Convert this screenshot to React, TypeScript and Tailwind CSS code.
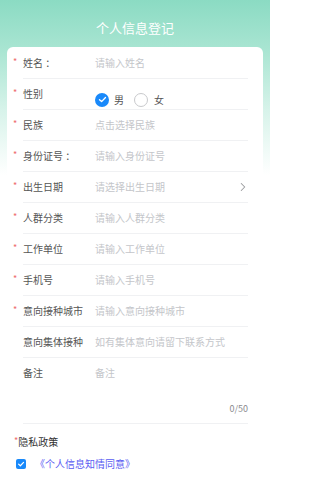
import { ChevronRight } from "lucide-react";

const font = "font-['Noto_Sans_CJK_SC','Noto_Sans',sans-serif]";

type Field = {
    label: string;
    placeholder: string;
    required?: boolean;
    arrow?: boolean;
};

const fields: Field[] = [
    { label: "民族", placeholder: "点击选择民族", required: true },
    { label: "身份证号 ：", placeholder: "请输入身份证号", required: true },
    { label: "出生日期", placeholder: "请选择出生日期", required: true, arrow: true },
    { label: "人群分类", placeholder: "请输入人群分类", required: true },
    { label: "工作单位", placeholder: "请输入工作单位", required: true },
    { label: "手机号", placeholder: "请输入手机号", required: true },
    { label: "意向接种城市", placeholder: "请输入意向接种城市", required: true },
    { label: "意向集体接种", placeholder: "如有集体意向请留下联系方式" },
];

function Star({ show }: { show?: boolean }) {
    return (
        <span className="w-[10px] -ml-[10px] shrink-0 text-[9px] leading-none text-[#ee6b6b] -mt-[3px]">
            {show ? "*" : ""}
        </span>
    );
}

function Row({ label, placeholder, required, arrow }: Field) {
    return (
        <div className="flex h-[31px] items-center border-b border-[#f0f1f3]">
            <Star show={required} />
            <span className="w-[72px] shrink-0 text-[10px] leading-[14px] text-[#555555] whitespace-pre">{label}</span>
            <span className="flex-1 text-[10px] leading-[14px] text-[#c4c6ca]">{placeholder}</span>
            {arrow && <ChevronRight className="w-[14px] h-[14px] text-[#9a9b9e] -mr-[2px]" strokeWidth={1.8} />}
        </div>
    );
}

export default function App() {
    return (
        <div
            className={`${font} w-[270px] h-[479px] overflow-hidden bg-[linear-gradient(180deg,#8bdbc3_0px,#a9e5d2_50px,#d7f3ea_110px,#ffffff_175px)]`}
        >
            <div className="h-[47px] pt-[9px] flex items-center justify-center">
                <h1 className="text-[13px] leading-[16px] text-white">个人信息登记</h1>
            </div>

            <div className="mx-[7px] rounded-t-[6px] bg-white pt-[1px] pl-[16px] pr-[15px] h-[432px]">
                <div className="flex h-[31px] items-center border-b border-[#f0f1f3]">
                    <Star show />
                    <span className="w-[72px] shrink-0 text-[10px] leading-[14px] text-[#555555] whitespace-pre">姓名 ：</span>
                    <span className="flex-1 text-[10px] leading-[14px] text-[#c4c6ca]">请输入姓名</span>
                </div>

                <div className="flex h-[31px] items-center border-b border-[#f0f1f3]">
                    <Star show />
                    <span className="w-[72px] shrink-0 text-[10px] leading-[14px] text-[#555555]">性别</span>
                    <div className="flex items-center pt-[11px]">
                        <span className="w-[14px] h-[14px] rounded-full bg-[#1989fa] flex items-center justify-center">
                            <svg viewBox="0 0 12 12" className="w-[9px] h-[9px]">
                                <path d="M2 6.2 L4.8 8.8 L10 3.4" fill="none" stroke="white" strokeWidth="1.8" strokeLinecap="round" strokeLinejoin="round" />
                            </svg>
                        </span>
                        <span className="ml-[5px] text-[10px] leading-[14px] text-[#555555]">男</span>
                        <span className="ml-[10px] w-[14px] h-[14px] rounded-full border border-[#c8c9cc]" />
                        <span className="ml-[6px] text-[10px] leading-[14px] text-[#555555]">女</span>
                    </div>
                </div>

                {fields.map((f) => (
                    <Row key={f.label} {...f} />
                ))}

                <div className="border-b border-[#f0f1f3] pt-[8px] pb-[7px]">
                    <div className="flex">
                        <span className="w-[72px] shrink-0 text-[10px] leading-[14px] text-[#555555]">备注</span>
                        <span className="flex-1 text-[10px] leading-[14px] text-[#c4c6ca]">备注</span>
                    </div>
                    <div className="mt-[22px] text-right text-[9px] leading-[14px] text-[#8a8b8e]">0/50</div>
                </div>

                <div className="-ml-[9px] pt-[11px] flex items-center">
                    <span className="text-[9px] leading-none text-[#ee6b6b] -mt-[3px]">*</span>
                    <span className="text-[10px] leading-[14px] text-[#333333]">隐私政策</span>
                </div>

                <div className="-ml-[7px] mt-[8px] flex items-center">
                    <span className="w-[10px] h-[10px] rounded-[2px] bg-[#1989fa] flex items-center justify-center">
                        <svg viewBox="0 0 10 10" className="w-[8px] h-[8px]">
                            <path d="M2 5.2 L4.2 7.2 L8.2 3" fill="none" stroke="white" strokeWidth="1.5" strokeLinecap="round" strokeLinejoin="round" />
                        </svg>
                    </span>
                    <span className="ml-[9px] text-[10px] leading-[14px] text-[#5a5cf2]">《个人信息知情同意》</span>
                </div>
            </div>
        </div>
    );
}
